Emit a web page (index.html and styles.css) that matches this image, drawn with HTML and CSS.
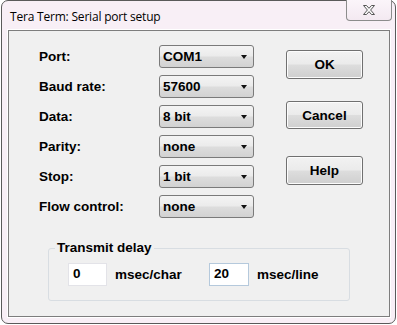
FILE: index.html
```html
<!DOCTYPE html>
<html lang="en">
<head>
  <meta charset="UTF-8" />
  <title>Tera Term: Serial port setup</title>
  <link rel="stylesheet" href="styles.css">
</head>
<body>
  <div class="window">
    <div class="titlebar">
      <span class="title">Tera Term: Serial port setup</span>
      <div class="close">
        <svg width="12" height="10" viewBox="0 0 12 10">
          <polygon points="0.5,0.5 3.5,0.5 6,3.3 8.5,0.5 11.5,0.5 7.6,5 11.5,9.5 8.5,9.5 6,6.7 3.5,9.5 0.5,9.5 4.4,5"
                   fill="#fafafa" stroke="#555" stroke-width="1" stroke-linejoin="miter"/>
        </svg>
      </div>
    </div>

    <div class="client">
      <div class="top">
        <div class="form">
          <label>Port:</label>
          <div class="combo"><span>COM1</span><i class="arrow"></i></div>
          <label>Baud rate:</label>
          <div class="combo"><span>57600</span><i class="arrow"></i></div>
          <label>Data:</label>
          <div class="combo"><span>8 bit</span><i class="arrow"></i></div>
          <label>Parity:</label>
          <div class="combo"><span>none</span><i class="arrow"></i></div>
          <label>Stop:</label>
          <div class="combo"><span>1 bit</span><i class="arrow"></i></div>
          <label>Flow control:</label>
          <div class="combo"><span>none</span><i class="arrow"></i></div>
        </div>

        <div class="buttons">
          <button class="btn ok">OK</button>
          <button class="btn cancel">Cancel</button>
          <button class="btn help">Help</button>
        </div>
      </div>

      <fieldset class="group">
        <legend>Transmit delay</legend>
        <div class="delay">
          <div class="edit">0</div>
          <span class="unit char">msec/char</span>
          <div class="edit focus">20</div>
          <span class="unit">msec/line</span>
        </div>
      </fieldset>
    </div>
  </div>
</body>
</html>
```

FILE: styles.css
```css
body {
  margin: 0;
  padding: 0;
  background: #ffffff;
  font-family: 'Liberation Sans', Arial, sans-serif;
}

.window {
  box-sizing: border-box;
  width: 395px;
  height: 324px;
  margin-left: 1px;
  background: #f8eff6;
  border: 1px solid #5a5a5a;
  border-radius: 7px;
  display: flex;
  flex-direction: column;
}

.titlebar {
  height: 29px;
  display: flex;
  justify-content: space-between;
  align-items: flex-start;
}

.title {
  font-family: 'Open Sans', 'Noto Sans', sans-serif;
  font-size: 12px;
  color: #000;
  margin: 7px 0 0 8px;
  letter-spacing: -0.2px;
}

.close {
  box-sizing: border-box;
  width: 46px;
  height: 21px;
  margin-right: 3px;
  margin-top: -1px;
  border: 1px solid #8c8c8c;
  border-top: none;
  border-radius: 0 0 4px 4px;
  background: linear-gradient(#fbf5fa, #f3e9f1);
  display: flex;
  align-items: center;
  justify-content: center;
}

.client {
  box-sizing: border-box;
  margin: 0 5px 0 6px;
  height: 287px;
  background: #f0f0f0;
  border: 1px solid #7d7d7d;
  box-shadow: 0 0 0 1px #ffffff;
  font-weight: bold;
  font-size: 13.5px;
  color: #000;
}

.top {
  display: flex;
}

.form {
  display: grid;
  grid-template-columns: 120px 95px;
  grid-auto-rows: 23px;
  row-gap: 7px;
  margin: 14px 0 0 30px;
}

.form label {
  display: flex;
  align-items: center;
}

.combo {
  box-sizing: border-box;
  border: 1px solid #7a7a7a;
  border-radius: 3px;
  background: linear-gradient(#f4f4f4 0%, #ebebeb 48%, #dddddd 52%, #d2d2d2 100%);
  display: flex;
  align-items: center;
  justify-content: space-between;
  padding: 0 6px 0 3px;
}

.arrow {
  width: 0;
  height: 0;
  border-left: 3.5px solid transparent;
  border-right: 3.5px solid transparent;
  border-top: 4px solid #111;
}

.buttons {
  display: flex;
  flex-direction: column;
  margin: 19px 0 0 32px;
}

.btn {
  box-sizing: border-box;
  width: 77px;
  height: 29px;
  padding: 0;
  font-family: inherit;
  font-weight: bold;
  font-size: 13.5px;
  color: #000;
  border: 1px solid #707070;
  border-radius: 3px;
  background: linear-gradient(#f2f2f2 0%, #ebebeb 48%, #dddddd 52%, #cfcfcf 100%);
  box-shadow: inset 0 0 0 1px #fcfcfc;
}

.cancel {
  margin-top: 22px;
  height: 28px;
}

.help {
  margin-top: 27px;
}

.group {
  box-sizing: border-box;
  width: 302px;
  min-width: 0;
  height: 61px;
  margin: 22px 0 0 39px;
  padding: 0 0 0 6px;
  border: 1px solid #d8dde2;
  border-radius: 3px;
}

.group legend {
  padding: 0 2px;
  line-height: 16px;
}

.delay {
  display: flex;
  align-items: center;
  margin: 7px 0 0 13px;
}

.edit {
  box-sizing: border-box;
  flex: none;
  width: 39px;
  height: 23px;
  background: #ffffff;
  border: 1px solid #e3e3e8;
  padding: 2px 0 0 4px;
}

.edit.focus {
  width: 40px;
  border-color: #b5c9dc;
}

.unit {
  flex: none;
  margin-left: 8px;
}

.unit.char {
  width: 94px;
}
```
